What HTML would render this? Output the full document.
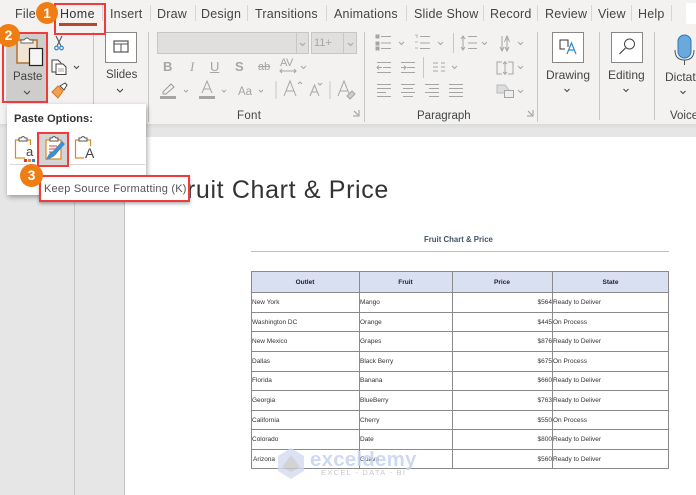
<!DOCTYPE html>
<html><head><meta charset="utf-8">
<style>
html,body{margin:0;padding:0;width:696px;height:495px;overflow:hidden;background:#e6e6e6;font-family:"Liberation Sans",sans-serif}
*{box-sizing:border-box}
.a{position:absolute}
.t{position:absolute;white-space:nowrap;color:#444;font-size:12.5px;line-height:16px}
.tab{top:6px;letter-spacing:.2px}
.sep{position:absolute;width:1px;background:#d8d6d4}
.r{position:absolute;border:2px solid #ee3c3c}
.n{position:absolute;width:23px;height:23px;border-radius:50%;background:#ef7d14;color:#fff;font-weight:bold;font-size:14px;line-height:23px;text-align:center;font-family:"Liberation Sans",sans-serif}
.c{position:absolute;font-size:6.5px;line-height:8px;color:#333;white-space:nowrap;filter:blur(.25px)}
.h{position:absolute;font-size:6.5px;line-height:8px;color:#222;font-weight:bold;text-align:center;white-space:nowrap;filter:blur(.25px)}
.g{color:#a5a5a5}
</style></head><body>
<!-- ribbon -->
<div class="a" style="left:0;top:0;width:696px;height:124px;background:#f3f2f1"></div>
<div class="a" style="left:0;top:124px;width:696px;height:5px;background:linear-gradient(#dadada,#e6e6e6)"></div>
<!-- tabs -->
<div class="t tab" style="left:15px">File</div>
<div class="t tab" style="left:60px;color:#333;letter-spacing:.4px">Home</div>
<div class="a" style="left:59px;top:23px;width:38px;height:3px;background:#b7472a"></div>
<div class="t tab" style="left:110px">Insert</div>
<div class="t tab" style="left:157px">Draw</div>
<div class="t tab" style="left:201px">Design</div>
<div class="t tab" style="left:255px">Transitions</div>
<div class="t tab" style="left:334px">Animations</div>
<div class="t tab" style="left:414px">Slide Show</div>
<div class="t tab" style="left:490px">Record</div>
<div class="t tab" style="left:545px">Review</div>
<div class="t tab" style="left:598px">View</div>
<div class="t tab" style="left:638px">Help</div>
<div class="sep" style="left:102px;top:5px;height:16px"></div>
<div class="sep" style="left:150px;top:5px;height:16px"></div>
<div class="sep" style="left:195px;top:5px;height:16px"></div>
<div class="sep" style="left:247px;top:5px;height:16px"></div>
<div class="sep" style="left:326px;top:5px;height:16px"></div>
<div class="sep" style="left:406px;top:5px;height:16px"></div>
<div class="sep" style="left:483px;top:5px;height:16px"></div>
<div class="sep" style="left:537px;top:5px;height:16px"></div>
<div class="sep" style="left:591px;top:5px;height:16px"></div>
<div class="sep" style="left:631px;top:5px;height:16px"></div>
<div class="sep" style="left:671px;top:5px;height:16px"></div>
<div class="a" style="left:686px;top:3px;width:10px;height:21px;background:#fff;border-radius:2px 0 0 2px"></div>
<!-- group separators -->
<div class="sep" style="left:93px;top:32px;height:90px;background:#c8c6c4"></div>
<div class="sep" style="left:148px;top:32px;height:90px;background:#c8c6c4"></div>
<div class="sep" style="left:364px;top:32px;height:90px;background:#c8c6c4"></div>
<div class="sep" style="left:537px;top:32px;height:90px;background:#c8c6c4"></div>
<div class="sep" style="left:599px;top:32px;height:88px;background:#c8c6c4"></div>
<div class="sep" style="left:654px;top:32px;height:88px;background:#c8c6c4"></div>
<!-- paste button -->
<div class="a" style="left:6px;top:33px;width:41px;height:69px;background:#cfcdcb"></div>
<svg class="a" style="left:0;top:0" width="150" height="105" viewBox="0 0 150 105" fill="none">
<rect x="17" y="40" width="20" height="23" fill="#f0e5d4" stroke="#b5763b" stroke-width="1.6"/>
<path d="M21 43v-3h3q3-4 6 0h3v3z" fill="#fff" stroke="#666"/>
<rect x="29.500" y="48.500" width="13" height="17" fill="#f5f5f5" stroke="#222" stroke-width="1.2"/>
<path d="M24 91l3 3 3-3" stroke="#444"/>
<path d="M56 36l5 10M62 36l-5 10" stroke="#555" stroke-width="1.100"/>
<circle cx="56.500" cy="48" r="1.800" stroke="#2f86c9" stroke-width="1.200"/><circle cx="61.500" cy="48" r="1.800" stroke="#2f86c9" stroke-width="1.200"/>
<path d="M52 60h6l3 3v9h-9z" fill="#fff" stroke="#444"/><path d="M56 64h7l3 3v7.500h-10z" fill="#fff" stroke="#444"/><path d="M58 69h6M58 71h6" stroke="#888" stroke-width=".7"/>
<path d="M74 66l2.500 2.500 2.500-2.500" stroke="#444"/>
<path d="M52 92l6-6 5 5-5 7z" fill="#f4a14b" stroke="#d9742a"/><path d="M60 86l5-3 2 2-3 5z" fill="#fff" stroke="#444"/>
<rect x="105.500" y="32.500" width="31" height="30" fill="#fff" stroke="#8a8886"/>
<rect x="114" y="41" width="14" height="11" stroke="#555" stroke-width="1.200"/><path d="M114 44h14M121 44v8" stroke="#555"/>
<path d="M117 89l3 3 3-3" stroke="#444"/>
</svg>
<div class="t" style="left:13px;top:69px;font-size:11.500px">Paste</div>
<div class="t" style="left:106px;top:67px;font-size:11.500px">Slides</div>
<!-- font group -->
<div class="a" style="left:157px;top:32px;width:152px;height:22px;background:#e1dfdd;border:1px solid #c8c6c4"></div>
<div class="a" style="left:296px;top:32px;width:1px;height:22px;background:#c8c6c4"></div>
<div class="a" style="left:311px;top:32px;width:46px;height:22px;background:#e1dfdd;border:1px solid #c8c6c4"></div>
<div class="a" style="left:343px;top:32px;width:1px;height:22px;background:#c8c6c4"></div>
<div class="t g" style="left:314px;top:35px;font-size:11px">11+</div>
<svg class="a" style="left:150px;top:25px" width="214" height="100" viewBox="150 25 214 100" fill="none" stroke="#a5a5a5">
<path d="M300 43l2.500 2.500 2.500-2.500M348 43l2.500 2.500 2.500-2.500M301 66l2.500 2.500 2.500-2.500M184 90l2 2 2-2M222 90l2 2 2-2M259 90l2 2 2-2"/>
<path d="M280 71h16M282 69l-2 2 2 2M294 69l2 2-2 2"/>
<path d="M163 92l8-8 3 3-8 7h-3z" stroke="#999"/><rect x="160" y="96" width="16" height="3" fill="#a5a5a5" stroke="none"/>
<rect x="199" y="96" width="16" height="3" fill="#a5a5a5" stroke="none"/>
<path d="M202 93l5-12 5 12M204 89h6"/>
<path d="M276 81v18M330 81v18" stroke="#c8c6c4"/>
<path d="M284 96l6-15 6 15M286 91h8M298 84l2-2 2 2"/>
<path d="M310 96l4.500-11 4.500 11M312 92h5M318 83l2 2 2-2"/>
<path d="M338 96l6-15 6 15M340 91h8"/>
<path d="M347 96l5-5 3 3-5 5z" fill="#ccc"/>
<path d="M353 116h6v-6M354 111l4 4" stroke="#999"/>
</svg>
<div class="t g" style="left:163px;top:59px;font-weight:bold;font-size:13px">B</div>
<div class="t g" style="left:190px;top:59px;font-style:italic;font-size:13px;font-family:'Liberation Serif',serif">I</div>
<div class="t g" style="left:210px;top:59px;font-size:13px;text-decoration:underline">U</div>
<div class="t g" style="left:235px;top:59px;font-size:13px;font-weight:bold">S</div>
<div class="t g" style="left:258px;top:59px;font-size:11px;text-decoration:line-through">ab</div>
<div class="t g" style="left:280px;top:55px;font-size:11px;letter-spacing:-.5px">AV</div>
<div class="t g" style="left:238px;top:84px;font-size:11.500px">Aa</div>
<div class="t" style="left:237px;top:108px;font-size:11.500px;letter-spacing:.3px">Font</div>
<!-- paragraph -->
<svg class="a" style="left:366px;top:28px" width="170" height="92" viewBox="366 28 170 92" fill="none" stroke="#a5a5a5">
<path d="M376 35h3v3h-3zM376 42h3v3h-3zM376 47h3v3h-3z" fill="#a5a5a5"/>
<path d="M381 36.500h10M381 43h10M381 48.500h10M420 36.500h10M420 43h10M420 48.500h10"/>
<path d="M415 35h2v3M415 42h3M415 48h3" stroke-width=".8"/>
<path d="M399 42l2.500 2.500 2.500-2.500M438 42l2.500 2.500 2.500-2.500M482 42l2.500 2.500 2.500-2.500M518 42l2.500 2.500 2.500-2.500"/>
<path d="M453.500 33v20" stroke="#c8c6c4"/>
<path d="M468 36.500h9M468 43h9M468 48.500h9M463 37v12M461 39l2-3 2 3M461 47l2 3 2-3"/>
<path d="M502 36v15M500 47l2 4 2-4M507 36v15M505 47l2 4 2-4"/>
<path d="M377 62.500h14M383 67.500h8M377 72.500h14M377 67.500h5M379 65.500l-2 2 2 2M401 62.500h14M407 67.500h8M401 72.500h14M401 67.500h5M404 65.500l2 2-2 2"/>
<path d="M423.500 57v21" stroke="#c8c6c4"/>
<path d="M433 63h5M433 67h5M433 71h5M441 63h4M441 67h4M441 71h4M452 66l2.500 2.500 2.500-2.500M518 66l2.500 2.500 2.500-2.500"/>
<path d="M502 62h-5v12h5M508 62h5v12h-5M505 61v14M503 64l2-2 2 2M503 72l2 2 2-2"/>
<path d="M377 84.500h14M377 88.500h14M377 92.500h9M377 96.500h14M401 84.500h14M403 88.500h10M401 92.500h14M403 96.500h10M425 84.500h14M429 88.500h10M425 92.500h14M429 96.500h10M449 84.500h14M449 88.500h14M449 92.500h14M449 96.500h14"/>
<path d="M497 85h8l4 5-3 3h-9z" fill="#ddd" stroke="#bbb"/>
<rect x="504.500" y="90.500" width="9" height="7" fill="#eee"/>
<path d="M518 90l2.500 2.500 2.500-2.500"/>
<path d="M527 116h6v-6M528 111l4 4" stroke="#999"/>
</svg>
<div class="t g" style="left:504px;top:31px;font-size:9px">A</div>
<div class="t" style="left:417px;top:108px;font-size:11.500px">Paragraph</div>
<!-- Drawing/Editing/Dictate -->
<svg class="a" style="left:540px;top:28px" width="156" height="70" viewBox="540 28 156 70" fill="none">
<rect x="552.500" y="32.500" width="31" height="30" fill="#fff" stroke="#8a8886"/>
<path d="M568 47v-7h-8v9h5" stroke="#333"/>
<path d="M567 54l4.500-11 4.500 11M569 50h5" stroke="#2b8ad1" stroke-width="1.200"/>
<rect x="611.500" y="32.500" width="31" height="30" fill="#fff" stroke="#8a8886"/>
<circle cx="629.500" cy="44" r="5" stroke="#444"/><path d="M625.500 48l-6 6" stroke="#444" stroke-width="1.200"/>
<rect x="678" y="35" width="13" height="23" rx="6.500" fill="#6ba9dc" stroke="#2b78b8"/>
<path d="M675 50q0 10 9.500 10t9.500-10M684.500 60v5" stroke="#555"/>
<path d="M564.500 89l2.500 2.500 2.500-2.500M623.500 89l2.500 2.500 2.500-2.500M680.500 91l2.500 2.500 2.500-2.500" stroke="#444"/>
</svg>
<div class="t" style="left:546px;top:67px;font-size:12px">Drawing</div>
<div class="t" style="left:608px;top:67px;font-size:12px">Editing</div>
<div class="t" style="left:665px;top:69px;font-size:12px">Dictate</div>
<div class="t" style="left:670px;top:108px;font-size:11.500px">Voice</div>
<!-- lower canvas -->
<div class="a" style="left:74px;top:130px;width:1px;height:365px;background:#c6c6c6"></div>
<div class="a" style="left:124px;top:130px;width:1px;height:365px;background:#c6c6c6"></div>
<div class="a" style="left:125px;top:137px;width:571px;height:358px;background:#fff"></div>
<div class="a" style="left:171px;top:173px;font-size:25px;line-height:34px;color:#333;white-space:nowrap;letter-spacing:.65px">Fruit Chart &amp; Price</div>
<div class="a" style="left:424px;top:235px;font-size:7.800px;line-height:9px;font-weight:bold;color:#44546a;white-space:nowrap;filter:blur(.25px)">Fruit Chart &amp; Price</div>
<div class="a" style="left:251px;top:251px;width:418px;height:1px;background:#b4c3dc"></div>
<!-- table -->
<div class="a" style="left:251px;top:271px;width:418px;height:21px;background:#d9e0f1"></div>
<svg class="a" style="left:0;top:0" width="696" height="495" fill="none" stroke="#8a8a8a">
<path d="M251 271.500h418M251 292.500h418M251 312.500h418M251 331.500h418M251 351.500h418M251 371.500h418M251 390.500h418M251 410.500h418M251 429.500h418M251 449.500h418M251 468.500h418"/>
<path d="M251.500 271v198M359.500 271v198M452.500 271v198M552.500 271v198M668.500 271v198"/>
</svg>
<div class="h" style="left:251px;top:279px;width:108px">Outlet</div>
<div class="h" style="left:359px;top:279px;width:93px">Fruit</div>
<div class="h" style="left:452px;top:279px;width:100px">Price</div>
<div class="h" style="left:552px;top:279px;width:117px">State</div>
<div class="c" style="left:252px;top:299px">New York</div><div class="c" style="left:360px;top:299px">Mango</div><div class="c" style="left:452px;width:100px;text-align:right;top:299px">$564</div><div class="c" style="left:553px;top:299px">Ready to Deliver</div>
<div class="c" style="left:252px;top:319px">Washington DC</div><div class="c" style="left:360px;top:319px">Orange</div><div class="c" style="left:452px;width:100px;text-align:right;top:319px">$445</div><div class="c" style="left:553px;top:319px">On Process</div>
<div class="c" style="left:252px;top:338px">New Mexico</div><div class="c" style="left:360px;top:338px">Grapes</div><div class="c" style="left:452px;width:100px;text-align:right;top:338px">$876</div><div class="c" style="left:553px;top:338px">Ready to Deliver</div>
<div class="c" style="left:252px;top:358px">Dallas</div><div class="c" style="left:360px;top:358px">Black Berry</div><div class="c" style="left:452px;width:100px;text-align:right;top:358px">$675</div><div class="c" style="left:553px;top:358px">On Process</div>
<div class="c" style="left:252px;top:377px">Florida</div><div class="c" style="left:360px;top:377px">Banana</div><div class="c" style="left:452px;width:100px;text-align:right;top:377px">$660</div><div class="c" style="left:553px;top:377px">Ready to Deliver</div>
<div class="c" style="left:252px;top:397px">Georgia</div><div class="c" style="left:360px;top:397px">BlueBerry</div><div class="c" style="left:452px;width:100px;text-align:right;top:397px">$763</div><div class="c" style="left:553px;top:397px">Ready to Deliver</div>
<div class="c" style="left:252px;top:417px">California</div><div class="c" style="left:360px;top:417px">Cherry</div><div class="c" style="left:452px;width:100px;text-align:right;top:417px">$550</div><div class="c" style="left:553px;top:417px">On Process</div>
<div class="c" style="left:252px;top:436px">Colorado</div><div class="c" style="left:360px;top:436px">Date</div><div class="c" style="left:452px;width:100px;text-align:right;top:436px">$800</div><div class="c" style="left:553px;top:436px">Ready to Deliver</div>
<div class="c" style="left:253px;top:456px">Arizona</div><div class="c" style="left:360px;top:456px">Guava</div><div class="c" style="left:452px;width:100px;text-align:right;top:456px">$560</div><div class="c" style="left:553px;top:456px">Ready to Deliver</div>
<!-- watermark -->
<svg class="a" style="left:276px;top:448px;opacity:.8" width="30" height="32" viewBox="0 0 30 32"><path d="M15 0l13 8v15l-13 8-13-8V8z" fill="#d4dcf2"/><path d="M15 7l9 12-9 5-9-5z" fill="#c9c9c9"/></svg>
<div class="a" style="left:310px;top:447px;font-size:20.500px;line-height:26px;font-weight:bold;color:#c5d3f3;opacity:.85;white-space:nowrap;letter-spacing:.2px">exceldemy</div>
<div class="a" style="left:321px;top:468px;font-size:7.500px;line-height:10px;color:#c8c8c8;white-space:nowrap;letter-spacing:1.300px">EXCEL - DATA - BI</div>
<!-- paste menu -->
<div class="a" style="left:7px;top:104px;width:139px;height:91px;background:#fff;box-shadow:1px 2px 5px rgba(0,0,0,.35)"></div>
<div class="a" style="left:14px;top:112px;font-size:11.200px;line-height:15px;font-weight:bold;color:#333;white-space:nowrap">Paste Options:</div>
<div class="a" style="left:37px;top:132px;width:32px;height:35px;background:#d6d4d2"></div>
<svg class="a" style="left:10px;top:132px" width="90" height="34" viewBox="10 132 90 34" fill="none">
<rect x="15.500" y="140" width="15" height="18" stroke="#d98a22" stroke-width="1.200"/><path d="M19 141v-3h2q2-3 4 0h2v3z" fill="#fff" stroke="#555"/>
<rect x="46" y="140" width="15" height="19" fill="#fff" stroke="#d98a22" stroke-width="1.200"/><path d="M50 141v-3h2q2-3 4 0h2v3z" fill="#fff" stroke="#555"/>
<path d="M49 146h8M49 149h8M49 152h5" stroke="#d0433a"/>
<path d="M65 144l-8 9q-2 4-11 7 3-8 7-9l9-10z" fill="#3f8ed0"/>
<rect x="75.500" y="140" width="15" height="18" stroke="#d98a22" stroke-width="1.200"/><path d="M79 141v-3h2q2-3 4 0h2v3z" fill="#fff" stroke="#555"/>
<rect x="24" y="159" width="3" height="3" fill="#e03c32"/><rect x="28" y="159" width="3" height="3" fill="#ef8a1e"/><rect x="32" y="159" width="3" height="3" fill="#2f86c9"/>
</svg>
<div class="a" style="left:25px;top:145px;font-size:13px;line-height:14px;color:#444;background:#fff;padding:0 1px">a</div>
<div class="a" style="left:84px;top:146px;font-size:14px;line-height:15px;color:#444;background:#fff;padding:0 1px">A</div>
<div class="a" style="left:10px;top:164px;width:135px;height:1px;background:#d8d8d8"></div>
<!-- tooltip -->
<div class="a" style="left:39px;top:175px;width:151px;height:27px;background:#fff;box-shadow:0 2px 3px rgba(0,0,0,.3)"></div>
<div class="a" style="left:44px;top:182px;font-size:11px;line-height:14px;color:#555;white-space:nowrap;letter-spacing:.22px">Keep Source Formatting (K)</div>
<!-- callouts -->
<div class="r" style="left:54px;top:3px;width:52px;height:32px"></div>
<div class="r" style="left:2px;top:32px;width:46px;height:71px"></div>
<div class="r" style="left:37px;top:132px;width:32px;height:35px"></div>
<div class="r" style="left:39px;top:175px;width:151px;height:27px"></div>
<div class="n" style="left:36px;top:2px;width:22px;height:22px;line-height:22px">1</div>
<div class="n" style="left:-3px;top:24px">2</div>
<div class="n" style="left:20px;top:164px">3</div>
</body></html>
